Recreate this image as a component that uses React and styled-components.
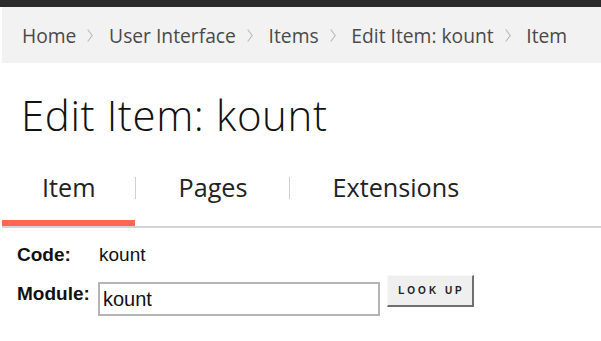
import styled, { createGlobalStyle } from 'styled-components';

const GlobalStyle = createGlobalStyle`
	body {
		margin: 0;
		background: #fff;
	}
`;

const crumbs = ['Home', 'User Interface', 'Items', 'Edit Item: kount', 'Item'];
const tabs = ['Item', 'Pages', 'Extensions'];

const TopBar = styled.div`
	height: 7px;
	background: #2b2b2b;
`;

const Breadcrumbs = styled.nav`
	display: flex;
	align-items: center;
	height: 56px;
	margin-left: 2px;
	padding-left: 20px;
	background: #f2f2f2;
	font-family: 'Open Sans', sans-serif;
	font-size: 19.25px;
	color: #4a4a4a;
`;

const Crumb = styled.span`
	white-space: nowrap;
`;

const Chevron = styled.svg`
	width: 6px;
	height: 13px;
	margin: 1px 15.7px 0 11px;
	flex: none;
`;

const Title = styled.h1`
	margin: 29px 0 0 21px;
	font-family: 'Open Sans', sans-serif;
	font-weight: 300;
	font-size: 42px;
	line-height: 46px;
	letter-spacing: 0.6px;
	color: #111;
`;

const TabBar = styled.div`
	display: flex;
	align-items: flex-start;
	margin: 34px 0 0 2px;
	border-bottom: 2px solid #d4d4d4;
`;

const Tab = styled.div`
	padding: 0 ${({ $first }) => ($first ? 40 : 42)}px 18px;
	border-bottom: 6px solid ${({ $active }) => ($active ? '#ff6753' : 'transparent')};
	font-family: 'Open Sans', sans-serif;
	font-size: 25.2px;
	line-height: 30px;
	color: #222;
`;

const TabDivider = styled.span`
	width: 1px;
	height: 22px;
	margin-top: 5px;
	background: #cfcfcf;
`;

const Form = styled.div`
	margin: 16px 0 0 17px;
	font-family: 'Liberation Sans', Arial, sans-serif;
	font-size: 19px;
	line-height: 22px;
	color: #111;
`;

const Row = styled.div`
	display: flex;
	align-items: flex-start;
	margin-top: ${({ $gap }) => $gap || 0}px;
`;

const Label = styled.label`
	width: 81px;
	flex: none;
	font-weight: 700;
	margin-top: ${({ $offset }) => $offset || 0}px;
`;

const Value = styled.span`
	margin-left: 1px;
`;

const TextInput = styled.input`
	box-sizing: border-box;
	width: 282px;
	height: 34px;
	margin-top: 7px;
	padding: 0 3px;
	border: 2px solid #b5b5b5;
	font-family: 'Liberation Sans', Arial, sans-serif;
	font-size: 20px;
	color: #111;
	outline: none;
`;

const LookupButton = styled.button`
	box-sizing: border-box;
	width: 87px;
	height: 32px;
	margin-left: 7px;
	padding: 0 0 0 3px;
	background: #efefef;
	border: 1px solid #f8f8f8;
	border-right: 2px solid #6f6f6f;
	border-bottom: 2px solid #6f6f6f;
	font-family: 'Liberation Sans', Arial, sans-serif;
	font-size: 10px;
	font-weight: 700;
	letter-spacing: 3px;
	color: #222;
	text-transform: uppercase;
`;

const Separator = () => (
	<Chevron viewBox="0 0 6 13">
		<path d="M0.7 0.5 L5.2 6.5 L0.7 12.5" fill="none" stroke="#b8b8b8" strokeWidth="1.1" />
	</Chevron>
);

export default function App() {
	return (
		<>
			<GlobalStyle />
			<TopBar />
			<Breadcrumbs>
				{crumbs.map((crumb, i) => [
					i > 0 && <Separator key={'s' + i} />,
					<Crumb key={crumb + i}>{crumb}</Crumb>,
				])}
			</Breadcrumbs>
			<Title>Edit Item: kount</Title>
			<TabBar>
				{tabs.map((tab, i) => [
					i > 0 && <TabDivider key={'d' + i} />,
					<Tab key={tab} $active={i === 0} $first={i === 0}>
						{tab}
					</Tab>,
				])}
			</TabBar>
			<Form>
				<Row>
					<Label>Code:</Label>
					<Value>kount</Value>
				</Row>
				<Row $gap={9}>
					<Label $offset={8}>Module:</Label>
					<TextInput defaultValue="kount" />
					<LookupButton>Look up</LookupButton>
				</Row>
			</Form>
		</>
	);
}
